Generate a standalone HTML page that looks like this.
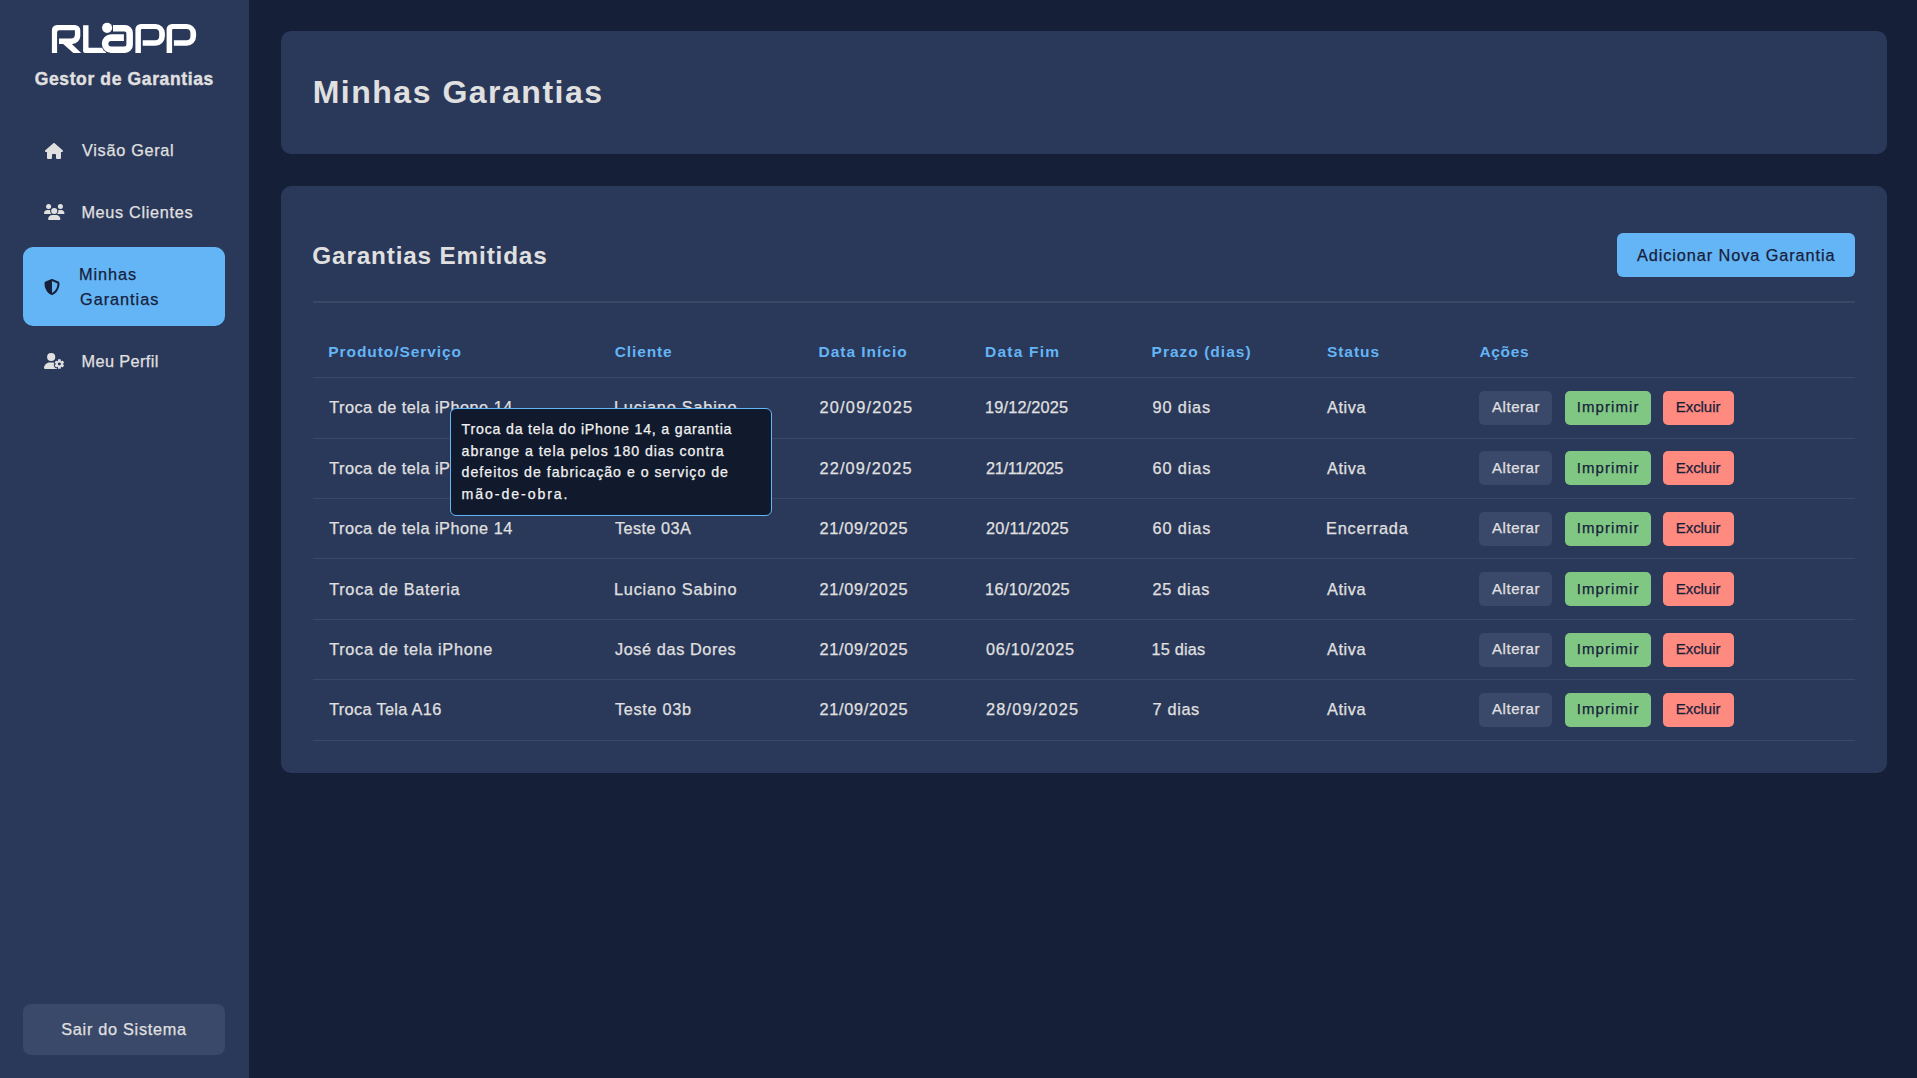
<!DOCTYPE html>
<html lang="pt-BR"><head><meta charset="utf-8"><title>Minhas Garantias</title>
<style>
html,body{margin:0;padding:0;width:1917px;height:1078px;overflow:hidden;background:#161f38;font-family:"Liberation Sans",sans-serif;}
.a{position:absolute;box-sizing:border-box;}
.t{position:absolute;white-space:nowrap;line-height:1;font-family:"Liberation Sans",sans-serif;}
.r{-webkit-text-stroke:0.25px currentColor;}
.sidebar{left:0;top:0;width:249px;height:1078px;background:#2a3859;}
.card{background:#2a3859;border-radius:10px;}
.hl{height:1px;background:#3a4868;}
.btn{border-radius:5px;}
</style></head><body>
<div class="a sidebar"></div>
<!-- logo -->
<svg class="a" style="left:0;top:0" width="249" height="70" viewBox="0 0 249 70">
<g fill="#ffffff">
<path d="M51.9 52.9V30.2a5 5 0 0 1 5-5.2H74.8a5.5 5.5 0 0 1 5.5 5.5V35.9a8 8 0 0 1-8 8H59V38.4H70.9a4 4 0 0 0 4-4V30.2H59.1a2 2 0 0 0-2 2V52.9Z"/>
<path d="M62.6 43.6H71.3L81.2 52.9H73.3Z"/>
<path d="M83.1 25.2H88.5V47.8H106V52.9H85.1a2 2 0 0 1-2-2Z"/>

<path d="M111.15 52.9a9.35 9.35 0 0 1 0-18.7" fill="none" stroke="#2a3859" stroke-width="1.8"/>
<path d="M113 25H124.9a8 8 0 0 1 8 8V44.9a8 8 0 0 1-8 8H111.15a9.35 9.35 0 0 1 0-18.7H113Z"/>
<path d="M135.4 53V29.3a5.4 5.4 0 0 1 5.4-5.4H155.5a9.4 9.4 0 0 1 9.4 9.4V36.35a9.4 9.4 0 0 1-9.4 9.4H142.7V40.3H155.2a4 4 0 0 0 4-4V33.1a4 4 0 0 0-4-4H141.9a1 1 0 0 0-1 1V53Z"/>
<path transform="translate(31.2 0)" d="M135.4 53V29.3a5.4 5.4 0 0 1 5.4-5.4H155.5a9.4 9.4 0 0 1 9.4 9.4V36.35a9.4 9.4 0 0 1-9.4 9.4H142.7V40.3H155.2a4 4 0 0 0 4-4V33.1a4 4 0 0 0-4-4H141.9a1 1 0 0 0-1 1V53Z"/>
</g>
<g fill="#2a3859">
<path d="M112.8 31.5H124.6a1.8 1.8 0 0 1 1.8 1.8V44.4a2 2 0 0 1-2 2H111.15a2.75 2.75 0 0 1 0-5.5H123.9V34.2H112.8Z"/>
</g>
<circle cx="107.1" cy="27.85" r="5.1" fill="#ffffff" stroke="#2a3859" stroke-width="1.4" paint-order="stroke"/>
</svg>
<!-- active nav -->
<div class="a" style="left:23px;top:247px;width:202px;height:79px;background:#64b5f6;border-radius:10px"></div>
<!-- sair -->
<div class="a" style="left:23px;top:1004px;width:202px;height:51px;background:#3a4869;border-radius:8px"></div>
<!-- cards -->
<div class="a card" style="left:281px;top:31px;width:1606px;height:123px"></div>
<div class="a card" style="left:281px;top:186px;width:1606px;height:587px"></div>
<div class="a" style="left:1617px;top:233px;width:238px;height:44px;background:#64b5f6;border-radius:6px"></div>
<div class="a hl" style="left:313px;top:301px;width:1542px;height:2px"></div>
<div class="a hl" style="left:313px;top:377px;width:1542px"></div>
<div class="a hl" style="left:313px;top:438px;width:1542px"></div>
<div class="a hl" style="left:313px;top:498px;width:1542px"></div>
<div class="a hl" style="left:313px;top:558px;width:1542px"></div>
<div class="a hl" style="left:313px;top:619px;width:1542px"></div>
<div class="a hl" style="left:313px;top:679px;width:1542px"></div>
<div class="a hl" style="left:313px;top:740px;width:1542px"></div>
<!-- icons -->
<svg class="a" style="left:45px;top:143px" width="18" height="16" viewBox="0 0 576 512"><path fill="#e0e0e0" d="M575.8 255.5c0 18-15 32.1-32 32.1h-32l.7 160.2c0 2.7-.2 5.4-.5 8.1V472c0 22.1-17.9 40-40 40H456c-1.1 0-2.2 0-3.3-.1c-1.4 .1-2.8 .1-4.2 .1H416 392c-22.1 0-40-17.9-40-40V448 384c0-17.7-14.3-32-32-32H256c-17.7 0-32 14.3-32 32v64 24c0 22.1-17.9 40-40 40H160 128.1c-1.5 0-3-.1-4.5-.2c-1.2 .1-2.4 .2-3.600 .2H104c-22.1 0-40-17.9-40-40V360c0-.9 0-1.9 .1-2.8V287.6H32c-18 0-32-14-32-32.1c0-9 3-17 10-24L266.4 8c7-7 15-8 22-8s15 2 21 7L564.8 231.5c8 7 12 15 11 24z"/></svg>
<svg class="a" style="left:44px;top:204px" width="20.5" height="16" viewBox="0 0 640 512" preserveAspectRatio="none"><path fill="#e0e0e0" d="M144 0a80 80 0 1 1 0 160A80 80 0 1 1 144 0zM512 0a80 80 0 1 1 0 160A80 80 0 1 1 512 0zM0 298.7C0 239.8 47.8 192 106.7 192h42.7c15.9 0 31 3.5 44.6 9.7c-1.3 7.2-1.9 14.7-1.9 22.3c0 38.2 16.8 72.5 43.3 96c-.2 0-.4 0-.7 0H21.3C9.6 320 0 310.4 0 298.7zM405.3 320c-.2 0-.4 0-.7 0c26.6-23.5 43.3-57.8 43.3-96c0-7.600-.7-15-1.9-22.3c13.6-6.300 28.7-9.700 44.6-9.700h42.7C592.2 192 640 239.8 640 298.7c0 11.8-9.6 21.3-21.3 21.3H405.3zM224 224a96 96 0 1 1 192 0 96 96 0 1 1 -192 0zM128 485.3C128 411.7 187.7 352 261.3 352H378.7C452.3 352 512 411.7 512 485.3c0 14.7-11.9 26.7-26.7 26.7H154.7c-14.7 0-26.7-11.9-26.7-26.7z"/></svg>
<svg class="a" style="left:44px;top:279px" width="16" height="16" viewBox="0 0 512 512"><path fill="#16203a" d="M256 0c4.6 0 9.2 1 13.4 2.9L457.7 82.8c22 9.3 38.4 31 38.3 57.2c-.5 99.2-41.3 280.7-213.6 363.200c-16.7 8-36.1 8-52.8 0C57.3 420.7 16.5 239.2 16 140c-.1-26.2 16.3-47.9 38.3-57.2L242.7 2.9C246.8 1 251.4 0 256 0zm0 66.8V444.8C394 378 431.100 230.1 432 141.4L256 66.8l0 0z"/></svg>
<svg class="a" style="left:43.5px;top:353px" width="20.5" height="16" viewBox="0 0 640 512" preserveAspectRatio="none"><path fill="#e0e0e0" d="M224 0a128 128 0 1 1 0 256A128 128 0 1 1 224 0zM178.3 304h91.4c11.8 0 23.4 1.2 34.5 3.3c-2.1 18.5 7.4 35.6 21.8 44.8c-16.6 10.6-26.7 31.6-20 53.3c4 12.9 9.4 25.5 16.4 37.6s15.2 23.1 24.4 33c15.7 16.9 39.6 18.4 57.2 8.7v.9c0 9.2 2.7 18.5 7.9 26.3H29.7C13.3 512 0 498.7 0 482.3C0 383.8 79.8 304 178.3 304zM436 218.2c0-7 4.5-13.3 11.3-14.8c10.5-2.4 21.5-3.7 32.7-3.7s22.2 1.3 32.7 3.7c6.8 1.5 11.3 7.8 11.3 14.8v30.6c7.9 3.4 15.4 7.7 22.3 12.8l24.9-14.3c6.1-3.5 13.7-2.7 18.5 2.4c7.6 8.1 14.3 17.2 20.1 27.2s10.3 20.4 13.5 31c2.1 6.7-1.1 13.7-7.2 17.2l-25 14.4c.4 4 .7 8.1 .7 12.3s-.2 8.2-.7 12.3l25 14.4c6.1 3.5 9.2 10.5 7.2 17.2c-3.3 10.6-7.8 21-13.5 31s-12.5 19.1-20.1 27.2c-4.8 5.1-12.5 5.9-18.5 2.4l-24.9-14.3c-6.9 5.1-14.3 9.4-22.3 12.8l0 30.6c0 7-4.5 13.3-11.3 14.8c-10.5 2.4-21.5 3.7-32.7 3.7s-22.2-1.3-32.7-3.7c-6.8-1.5-11.3-7.8-11.3-14.8V454.8c-8-3.4-15.6-7.7-22.5-12.900l-24.7 14.3c-6.1 3.5-13.7 2.7-18.5-2.4c-7.6-8.1-14.3-17.2-20.1-27.2s-10.3-20.4-13.5-31c-2.1-6.7 1.1-13.7 7.2-17.2l24.8-14.3c-.4-4.1-.7-8.2-.7-12.4s.3-8.3 .7-12.4L343.8 325c-6.1-3.5-9.2-10.5-7.2-17.2c3.3-10.6 7.7-21 13.5-31s12.5-19.1 20.1-27.2c4.8-5.1 12.4-5.9 18.5-2.4l24.8 14.3c6.9-5.1 14.5-9.4 22.5-12.9V218.2zm92.1 133.5a48.1 48.1 0 1 0 -96.1 0 48.1 48.1 0 1 0 96.1 0z"/></svg>
<div class="a btn" style="left:1479px;top:390.80px;width:73px;height:34px;background:#3a4869"></div>
<div class="a btn" style="left:1565px;top:390.80px;width:86px;height:34px;background:#81c784"></div>
<div class="a btn" style="left:1663px;top:390.80px;width:71px;height:34px;background:#ff8a80"></div>
<div class="a btn" style="left:1479px;top:451.27px;width:73px;height:34px;background:#3a4869"></div>
<div class="a btn" style="left:1565px;top:451.27px;width:86px;height:34px;background:#81c784"></div>
<div class="a btn" style="left:1663px;top:451.27px;width:71px;height:34px;background:#ff8a80"></div>
<div class="a btn" style="left:1479px;top:511.74px;width:73px;height:34px;background:#3a4869"></div>
<div class="a btn" style="left:1565px;top:511.74px;width:86px;height:34px;background:#81c784"></div>
<div class="a btn" style="left:1663px;top:511.74px;width:71px;height:34px;background:#ff8a80"></div>
<div class="a btn" style="left:1479px;top:572.21px;width:73px;height:34px;background:#3a4869"></div>
<div class="a btn" style="left:1565px;top:572.21px;width:86px;height:34px;background:#81c784"></div>
<div class="a btn" style="left:1663px;top:572.21px;width:71px;height:34px;background:#ff8a80"></div>
<div class="a btn" style="left:1479px;top:632.68px;width:73px;height:34px;background:#3a4869"></div>
<div class="a btn" style="left:1565px;top:632.68px;width:86px;height:34px;background:#81c784"></div>
<div class="a btn" style="left:1663px;top:632.68px;width:71px;height:34px;background:#ff8a80"></div>
<div class="a btn" style="left:1479px;top:693.15px;width:73px;height:34px;background:#3a4869"></div>
<div class="a btn" style="left:1565px;top:693.15px;width:86px;height:34px;background:#81c784"></div>
<div class="a btn" style="left:1663px;top:693.15px;width:71px;height:34px;background:#ff8a80"></div>

<div class="t" style="left:34.70px;top:70.80px;font-size:17.5px;font-weight:700;color:#e0e0e0;letter-spacing:0.630px;-webkit-text-stroke:0.4px currentColor">Gestor de Garantias</div>
<div class="t r" style="left:82.00px;top:142.00px;font-size:16.3px;font-weight:400;color:#e0e0e0;letter-spacing:0.695px">Visão Geral</div>
<div class="t r" style="left:81.40px;top:204.20px;font-size:16.3px;font-weight:400;color:#e0e0e0;letter-spacing:0.665px">Meus Clientes</div>
<div class="t r" style="left:79.00px;top:266.00px;font-size:16.3px;font-weight:400;color:#16203a;letter-spacing:0.951px">Minhas</div>
<div class="t r" style="left:80.00px;top:290.60px;font-size:16.3px;font-weight:400;color:#16203a;letter-spacing:0.969px">Garantias</div>
<div class="t r" style="left:81.50px;top:352.90px;font-size:16.3px;font-weight:400;color:#e0e0e0;letter-spacing:0.392px">Meu Perfil</div>
<div class="t r" style="left:61.30px;top:1021.00px;font-size:16.3px;font-weight:400;color:#e0e0e0;letter-spacing:0.702px">Sair do Sistema</div>
<div class="t" style="left:312.70px;top:75.60px;font-size:32px;font-weight:700;color:#e0e0e0;letter-spacing:1.510px">Minhas Garantias</div>
<div class="t" style="left:312.30px;top:244.20px;font-size:24.3px;font-weight:700;color:#e0e0e0;letter-spacing:0.841px">Garantias Emitidas</div>
<div class="t r" style="left:1637.00px;top:247.40px;font-size:16.3px;font-weight:400;color:#16203a;letter-spacing:0.913px">Adicionar Nova Garantia</div>
<div class="t" style="left:328.30px;top:344.00px;font-size:15.5px;font-weight:700;color:#64b5f6;letter-spacing:0.932px">Produto/Serviço</div>
<div class="t" style="left:614.80px;top:344.00px;font-size:15.5px;font-weight:700;color:#64b5f6;letter-spacing:0.874px">Cliente</div>
<div class="t" style="left:818.60px;top:344.00px;font-size:15.5px;font-weight:700;color:#64b5f6;letter-spacing:0.969px">Data Início</div>
<div class="t" style="left:985.00px;top:344.00px;font-size:15.5px;font-weight:700;color:#64b5f6;letter-spacing:1.218px">Data Fim</div>
<div class="t" style="left:1151.60px;top:344.00px;font-size:15.5px;font-weight:700;color:#64b5f6;letter-spacing:1.010px">Prazo (dias)</div>
<div class="t" style="left:1326.90px;top:344.00px;font-size:15.5px;font-weight:700;color:#64b5f6;letter-spacing:0.970px">Status</div>
<div class="t" style="left:1479.50px;top:344.00px;font-size:15.5px;font-weight:700;color:#64b5f6;letter-spacing:0.649px">Ações</div>
<div class="t r" style="left:329.20px;top:399.00px;font-size:16.3px;font-weight:400;color:#e0e0e0;letter-spacing:0.490px">Troca de tela iPhone 14</div>
<div class="t r" style="left:614.00px;top:399.00px;font-size:16.3px;font-weight:400;color:#e0e0e0;letter-spacing:0.785px">Luciano Sabino</div>
<div class="t r" style="left:819.50px;top:399.00px;font-size:16.3px;font-weight:400;color:#e0e0e0;letter-spacing:1.241px">20/09/2025</div>
<div class="t r" style="left:985.00px;top:399.00px;font-size:16.3px;font-weight:400;color:#e0e0e0;letter-spacing:0.174px">19/12/2025</div>
<div class="t r" style="left:1152.60px;top:399.00px;font-size:16.3px;font-weight:400;color:#e0e0e0;letter-spacing:0.840px">90 dias</div>
<div class="t r" style="left:1327.00px;top:399.00px;font-size:16.3px;font-weight:400;color:#e0e0e0;letter-spacing:0.590px">Ativa</div>
<div class="t r" style="left:1492.00px;top:399.00px;font-size:15px;font-weight:400;color:#e0e0e0;letter-spacing:0.553px">Alterar</div>
<div class="t r" style="left:1576.70px;top:399.00px;font-size:15px;font-weight:400;color:#16203a;letter-spacing:1.077px">Imprimir</div>
<div class="t r" style="left:1675.80px;top:399.00px;font-size:15px;font-weight:400;color:#16203a;letter-spacing:-0.069px">Excluir</div>
<div class="t r" style="left:329.20px;top:460.00px;font-size:16.3px;font-weight:400;color:#e0e0e0;letter-spacing:0.490px">Troca de tela iPhone 14</div>
<div class="t r" style="left:614.00px;top:460.00px;font-size:16.3px;font-weight:400;color:#e0e0e0;letter-spacing:0.785px">Luciano Sabino</div>
<div class="t r" style="left:819.50px;top:460.00px;font-size:16.3px;font-weight:400;color:#e0e0e0;letter-spacing:1.163px">22/09/2025</div>
<div class="t r" style="left:986.00px;top:460.00px;font-size:16.3px;font-weight:400;color:#e0e0e0;letter-spacing:-0.325px">21/11/2025</div>
<div class="t r" style="left:1152.60px;top:460.00px;font-size:16.3px;font-weight:400;color:#e0e0e0;letter-spacing:0.873px">60 dias</div>
<div class="t r" style="left:1327.00px;top:460.00px;font-size:16.3px;font-weight:400;color:#e0e0e0;letter-spacing:0.590px">Ativa</div>
<div class="t r" style="left:1492.00px;top:460.00px;font-size:15px;font-weight:400;color:#e0e0e0;letter-spacing:0.553px">Alterar</div>
<div class="t r" style="left:1576.70px;top:460.00px;font-size:15px;font-weight:400;color:#16203a;letter-spacing:1.077px">Imprimir</div>
<div class="t r" style="left:1675.80px;top:460.00px;font-size:15px;font-weight:400;color:#16203a;letter-spacing:-0.069px">Excluir</div>
<div class="t r" style="left:329.20px;top:520.00px;font-size:16.3px;font-weight:400;color:#e0e0e0;letter-spacing:0.490px">Troca de tela iPhone 14</div>
<div class="t r" style="left:615.00px;top:520.00px;font-size:16.3px;font-weight:400;color:#e0e0e0;letter-spacing:0.419px">Teste 03A</div>
<div class="t r" style="left:819.50px;top:520.00px;font-size:16.3px;font-weight:400;color:#e0e0e0;letter-spacing:0.719px">21/09/2025</div>
<div class="t r" style="left:986.00px;top:520.00px;font-size:16.3px;font-weight:400;color:#e0e0e0;letter-spacing:0.264px">20/11/2025</div>
<div class="t r" style="left:1152.60px;top:520.00px;font-size:16.3px;font-weight:400;color:#e0e0e0;letter-spacing:0.873px">60 dias</div>
<div class="t r" style="left:1326.00px;top:520.00px;font-size:16.3px;font-weight:400;color:#e0e0e0;letter-spacing:0.830px">Encerrada</div>
<div class="t r" style="left:1492.00px;top:520.00px;font-size:15px;font-weight:400;color:#e0e0e0;letter-spacing:0.553px">Alterar</div>
<div class="t r" style="left:1576.70px;top:520.00px;font-size:15px;font-weight:400;color:#16203a;letter-spacing:1.077px">Imprimir</div>
<div class="t r" style="left:1675.80px;top:520.00px;font-size:15px;font-weight:400;color:#16203a;letter-spacing:-0.069px">Excluir</div>
<div class="t r" style="left:329.20px;top:581.00px;font-size:16.3px;font-weight:400;color:#e0e0e0;letter-spacing:0.707px">Troca de Bateria</div>
<div class="t r" style="left:614.00px;top:581.00px;font-size:16.3px;font-weight:400;color:#e0e0e0;letter-spacing:0.785px">Luciano Sabino</div>
<div class="t r" style="left:819.50px;top:581.00px;font-size:16.3px;font-weight:400;color:#e0e0e0;letter-spacing:0.719px">21/09/2025</div>
<div class="t r" style="left:985.00px;top:581.00px;font-size:16.3px;font-weight:400;color:#e0e0e0;letter-spacing:0.352px">16/10/2025</div>
<div class="t r" style="left:1152.60px;top:581.00px;font-size:16.3px;font-weight:400;color:#e0e0e0;letter-spacing:0.707px">25 dias</div>
<div class="t r" style="left:1327.00px;top:581.00px;font-size:16.3px;font-weight:400;color:#e0e0e0;letter-spacing:0.590px">Ativa</div>
<div class="t r" style="left:1492.00px;top:581.00px;font-size:15px;font-weight:400;color:#e0e0e0;letter-spacing:0.553px">Alterar</div>
<div class="t r" style="left:1576.70px;top:581.00px;font-size:15px;font-weight:400;color:#16203a;letter-spacing:1.077px">Imprimir</div>
<div class="t r" style="left:1675.80px;top:581.00px;font-size:15px;font-weight:400;color:#16203a;letter-spacing:-0.069px">Excluir</div>
<div class="t r" style="left:329.20px;top:641.00px;font-size:16.3px;font-weight:400;color:#e0e0e0;letter-spacing:0.706px">Troca de tela iPhone</div>
<div class="t r" style="left:615.00px;top:641.00px;font-size:16.3px;font-weight:400;color:#e0e0e0;letter-spacing:0.586px">José das Dores</div>
<div class="t r" style="left:819.50px;top:641.00px;font-size:16.3px;font-weight:400;color:#e0e0e0;letter-spacing:0.719px">21/09/2025</div>
<div class="t r" style="left:986.00px;top:641.00px;font-size:16.3px;font-weight:400;color:#e0e0e0;letter-spacing:0.730px">06/10/2025</div>
<div class="t r" style="left:1151.60px;top:641.00px;font-size:16.3px;font-weight:400;color:#e0e0e0;letter-spacing:0.190px">15 dias</div>
<div class="t r" style="left:1327.00px;top:641.00px;font-size:16.3px;font-weight:400;color:#e0e0e0;letter-spacing:0.590px">Ativa</div>
<div class="t r" style="left:1492.00px;top:641.00px;font-size:15px;font-weight:400;color:#e0e0e0;letter-spacing:0.553px">Alterar</div>
<div class="t r" style="left:1576.70px;top:641.00px;font-size:15px;font-weight:400;color:#16203a;letter-spacing:1.077px">Imprimir</div>
<div class="t r" style="left:1675.80px;top:641.00px;font-size:15px;font-weight:400;color:#16203a;letter-spacing:-0.069px">Excluir</div>
<div class="t r" style="left:329.20px;top:701.00px;font-size:16.3px;font-weight:400;color:#e0e0e0;letter-spacing:0.335px">Troca Tela A16</div>
<div class="t r" style="left:615.00px;top:701.00px;font-size:16.3px;font-weight:400;color:#e0e0e0;letter-spacing:0.669px">Teste 03b</div>
<div class="t r" style="left:819.50px;top:701.00px;font-size:16.3px;font-weight:400;color:#e0e0e0;letter-spacing:0.719px">21/09/2025</div>
<div class="t r" style="left:986.00px;top:701.00px;font-size:16.3px;font-weight:400;color:#e0e0e0;letter-spacing:1.174px">28/09/2025</div>
<div class="t r" style="left:1152.60px;top:701.00px;font-size:16.3px;font-weight:400;color:#e0e0e0;letter-spacing:0.639px">7 dias</div>
<div class="t r" style="left:1327.00px;top:701.00px;font-size:16.3px;font-weight:400;color:#e0e0e0;letter-spacing:0.590px">Ativa</div>
<div class="t r" style="left:1492.00px;top:701.00px;font-size:15px;font-weight:400;color:#e0e0e0;letter-spacing:0.553px">Alterar</div>
<div class="t r" style="left:1576.70px;top:701.00px;font-size:15px;font-weight:400;color:#16203a;letter-spacing:1.077px">Imprimir</div>
<div class="t r" style="left:1675.80px;top:701.00px;font-size:15px;font-weight:400;color:#16203a;letter-spacing:-0.069px">Excluir</div>
<!-- tooltip -->
<div class="a" style="left:450px;top:408px;width:322px;height:108px;background:#111a2c;border:1px solid #64b5f6;border-radius:6px"></div>
<div class="t r" style="left:461.60px;top:421.70px;font-size:14.2px;font-weight:400;color:#f2f2f2;letter-spacing:0.786px">Troca da tela do iPhone 14, a garantia</div>
<div class="t r" style="left:461.60px;top:443.90px;font-size:14.2px;font-weight:400;color:#f2f2f2;letter-spacing:0.927px">abrange a tela pelos 180 dias contra</div>
<div class="t r" style="left:461.60px;top:464.90px;font-size:14.2px;font-weight:400;color:#f2f2f2;letter-spacing:0.981px">defeitos de fabricação e o serviço de</div>
<div class="t r" style="left:461.60px;top:487.10px;font-size:14.2px;font-weight:400;color:#f2f2f2;letter-spacing:1.889px">mão-de-obra.</div>
</body></html>
